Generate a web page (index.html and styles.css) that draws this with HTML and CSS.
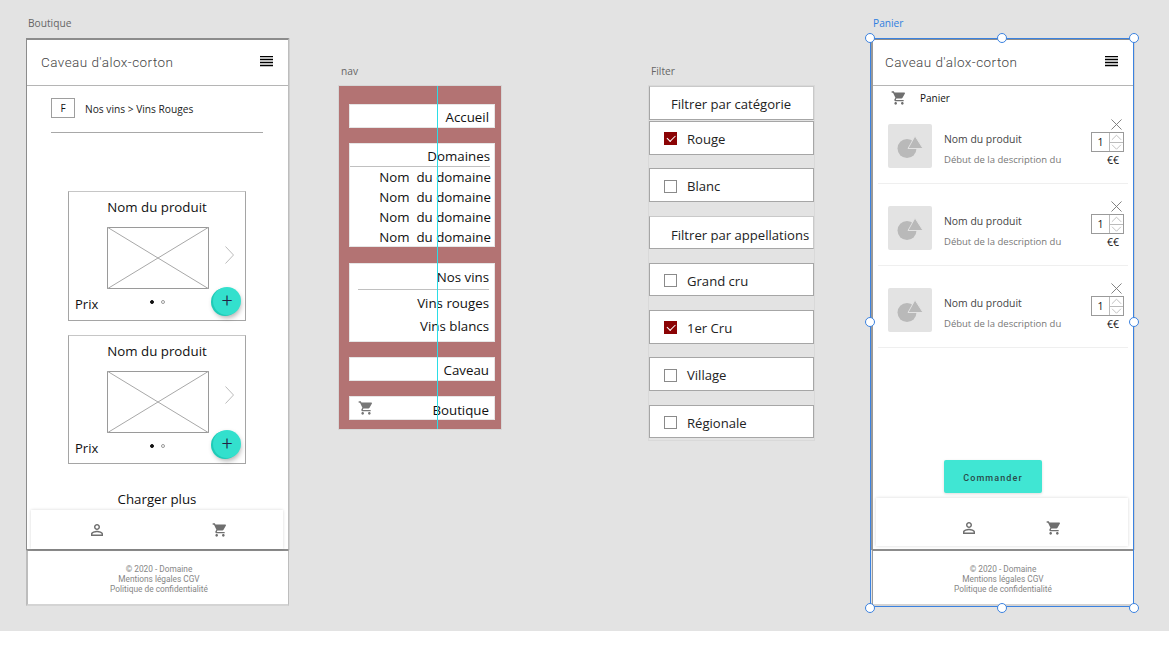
FILE: index.html
```html
<!DOCTYPE html>
<html lang="en">

<head>
    <meta charset="UTF-8">
    <meta name="viewport" content="width=device-width, initial-scale=1.0">
    <title>Caveau d'alox-corton</title>
    <link rel="stylesheet" href="styles.css">
</head>

<body>
    <svg class="defs" width="0" height="0">
        <symbol id="cart" viewBox="0 0 24 24">
            <path d="M7 18c-1.1 0-1.99.9-1.99 2S5.9 22 7 22s2-.9 2-2-.9-2-2-2zM1 2v2h2l3.6 7.59-1.35 2.45c-.16.28-.25.61-.25.96 0 1.1.9 2 2 2h12v-2H7.42c-.14 0-.25-.11-.25-.25l.03-.12.9-1.83h7.45c.75 0 1.41-.41 1.75-1.03l3.58-6.49c.08-.14.12-.31.12-.48 0-.55-.45-1-1-1H5.21l-.94-2H1zm16 16c-1.1 0-1.99.9-1.99 2s.89 2 1.99 2 2-.9 2-2-.9-2-2-2z" />
        </symbol>
        <symbol id="person" viewBox="0 0 24 24">
            <path d="M12 5.9c1.16 0 2.1.94 2.1 2.1s-.94 2.1-2.1 2.1S9.9 9.16 9.9 8s.94-2.1 2.1-2.1m0 9c2.97 0 6.1 1.46 6.1 2.1v1.1H5.9V17c0-.64 3.13-2.1 6.1-2.1M12 4C9.79 4 8 5.79 8 8s1.79 4 4 4 4-1.79 4-4-1.79-4-4-4zm0 9c-2.67 0-8 1.34-8 4v3h16v-3c0-2.66-5.33-4-8-4z" />
        </symbol>
        <symbol id="menu" viewBox="0 0 13 12">
            <path d="M0 .5h13M0 3.500h13M0 6.500h13M0 9.500h13" stroke="#000" stroke-width="1.300" fill="none" />
        </symbol>
        <symbol id="shapes" viewBox="0 0 44 44">
            <circle cx="19" cy="24.500" r="9.500" fill="#b9b9b9" />
            <path d="M27 12L35 24.500H20z" fill="#b9b9b9" stroke="#e3e3e3" stroke-width="1" />
        </symbol>
    </svg>

    <main class="canvas">
        <!-- Boutique -->
        <section class="artboard boutique">
            <span class="board-label">Boutique</span>
            <div class="phone">
                <header class="app-header">
                    <span class="brand">Caveau d'alox-corton</span>
                    <svg class="menu-icon"><use href="#menu" /></svg>
                </header>
                <div class="crumbs">
                    <span class="filter-btn">F</span>
                    <span class="crumb-text">Nos vins &gt; Vins Rouges</span>
                </div>
                <hr class="crumb-rule">

                <article class="product">
                    <h3 class="product-name">Nom du produit</h3>
                    <div class="product-media">
                        <svg class="placeholder" viewBox="0 0 102 62" preserveAspectRatio="none">
                            <rect x=".5" y=".5" width="101" height="61" fill="#fff" stroke="#9a9a9a" />
                            <path d="M0 0L102 62M102 0L0 62" stroke="#a8a8a8" fill="none" />
                        </svg>
                        <svg class="chevron" viewBox="0 0 9 18"><path d="M.5 .5l8 8.500-8 8.500" fill="none" stroke="#bbb" /></svg>
                    </div>
                    <div class="product-foot">
                        <span class="price">Prix</span>
                        <span class="dots"><i class="dot on"></i><i class="dot"></i></span>
                    </div>
                    <button class="fab">+</button>
                </article>

                <article class="product">
                    <h3 class="product-name">Nom du produit</h3>
                    <div class="product-media">
                        <svg class="placeholder" viewBox="0 0 102 62" preserveAspectRatio="none">
                            <rect x=".5" y=".5" width="101" height="61" fill="#fff" stroke="#9a9a9a" />
                            <path d="M0 0L102 62M102 0L0 62" stroke="#a8a8a8" fill="none" />
                        </svg>
                        <svg class="chevron" viewBox="0 0 9 18"><path d="M.5 .5l8 8.500-8 8.500" fill="none" stroke="#bbb" /></svg>
                    </div>
                    <div class="product-foot">
                        <span class="price">Prix</span>
                        <span class="dots"><i class="dot on"></i><i class="dot"></i></span>
                    </div>
                    <button class="fab">+</button>
                </article>

                <p class="load-more">Charger plus</p>
                <nav class="tabbar boutique-tabs">
                    <svg class="tab-icon person"><use href="#person" /></svg>
                    <svg class="tab-icon"><use href="#cart" /></svg>
                </nav>
            </div>
            <footer class="legal">
                <span>© 2020 - Domaine</span>
                <span>Mentions légales CGV</span>
                <span>Politique de confidentialité</span>
            </footer>
        </section>

        <!-- nav -->
        <section class="artboard nav-board">
            <span class="board-label">nav</span>
            <div class="nav-panel">
                <div class="nav-box nav-single">Accueil</div>
                <div class="nav-box nav-domains">
                    <div class="nav-title">Domaines</div>
                    <div class="nav-line">Nom &nbsp;du domaine</div>
                    <div class="nav-line">Nom &nbsp;du domaine</div>
                    <div class="nav-line">Nom &nbsp;du domaine</div>
                    <div class="nav-line">Nom &nbsp;du domaine</div>
                </div>
                <div class="nav-box nav-wines">
                    <div class="nav-title">Nos vins</div>
                    <div class="nav-sub">Vins rouges</div>
                    <div class="nav-sub">Vins blancs</div>
                </div>
                <div class="nav-box nav-single">Caveau</div>
                <div class="nav-box nav-single nav-shop">
                    <svg class="nav-cart"><use href="#cart" /></svg>
                    <span class="nav-shop-text">Boutique</span>
                </div>
                <span class="guide"></span>
            </div>
        </section>

        <!-- Filter -->
        <section class="artboard filter-board">
            <span class="board-label">Filter</span>
            <div class="filter-panel">
                <div class="filter-row filter-head first">Filtrer par catégorie</div>
                <label class="filter-row tight"><span class="check on"></span>Rouge</label>
                <label class="filter-row"><span class="check"></span>Blanc</label>
                <div class="filter-row filter-head second">Filtrer par appellations</div>
                <label class="filter-row"><span class="check"></span>Grand cru</label>
                <label class="filter-row"><span class="check on"></span>1er Cru</label>
                <label class="filter-row"><span class="check"></span>Village</label>
                <label class="filter-row"><span class="check"></span>Régionale</label>
            </div>
        </section>

        <!-- Panier -->
        <section class="artboard panier">
            <span class="board-label selected-label">Panier</span>
            <div class="phone panier-phone">
                <header class="app-header">
                    <span class="brand">Caveau d'alox-corton</span>
                    <svg class="menu-icon"><use href="#menu" /></svg>
                </header>
                <div class="cart-title">
                    <svg class="cart-icon"><use href="#cart" /></svg>
                    <span>Panier</span>
                </div>

                <div class="cart-item">
                    <svg class="thumb"><use href="#shapes" /></svg>
                    <div class="item-text">
                        <span class="item-name">Nom du produit</span>
                        <span class="item-desc">Début de la description du</span>
                    </div>
                    <div class="item-side">
                        <span class="remove">
                            <svg viewBox="0 0 12 12"><path d="M.5 .5l11 11M11.500 .5l-11 11" stroke="#777" fill="none" /></svg>
                        </span>
                        <div class="stepper">
                            <span class="qty">1</span>
                            <span class="arrows">
                                <svg viewBox="0 0 14 9"><path d="M2 7l5-5 5 5" stroke="#bbb" fill="none" /></svg>
                                <svg viewBox="0 0 14 9"><path d="M2 2l5 5 5-5" stroke="#bbb" fill="none" /></svg>
                            </span>
                        </div>
                        <span class="item-price">€€</span>
                    </div>
                </div>

                <div class="cart-item">
                    <svg class="thumb"><use href="#shapes" /></svg>
                    <div class="item-text">
                        <span class="item-name">Nom du produit</span>
                        <span class="item-desc">Début de la description du</span>
                    </div>
                    <div class="item-side">
                        <span class="remove">
                            <svg viewBox="0 0 12 12"><path d="M.5 .5l11 11M11.500 .5l-11 11" stroke="#777" fill="none" /></svg>
                        </span>
                        <div class="stepper">
                            <span class="qty">1</span>
                            <span class="arrows">
                                <svg viewBox="0 0 14 9"><path d="M2 7l5-5 5 5" stroke="#bbb" fill="none" /></svg>
                                <svg viewBox="0 0 14 9"><path d="M2 2l5 5 5-5" stroke="#bbb" fill="none" /></svg>
                            </span>
                        </div>
                        <span class="item-price">€€</span>
                    </div>
                </div>

                <div class="cart-item">
                    <svg class="thumb"><use href="#shapes" /></svg>
                    <div class="item-text">
                        <span class="item-name">Nom du produit</span>
                        <span class="item-desc">Début de la description du</span>
                    </div>
                    <div class="item-side">
                        <span class="remove">
                            <svg viewBox="0 0 12 12"><path d="M.5 .5l11 11M11.500 .5l-11 11" stroke="#777" fill="none" /></svg>
                        </span>
                        <div class="stepper">
                            <span class="qty">1</span>
                            <span class="arrows">
                                <svg viewBox="0 0 14 9"><path d="M2 7l5-5 5 5" stroke="#bbb" fill="none" /></svg>
                                <svg viewBox="0 0 14 9"><path d="M2 2l5 5 5-5" stroke="#bbb" fill="none" /></svg>
                            </span>
                        </div>
                        <span class="item-price">€€</span>
                    </div>
                </div>

                <button class="order-btn">Commander</button>
                <nav class="tabbar panier-tabs">
                    <svg class="tab-icon person"><use href="#person" /></svg>
                    <svg class="tab-icon"><use href="#cart" /></svg>
                </nav>
            </div>
            <footer class="legal panier-legal">
                <span>© 2020 - Domaine</span>
                <span>Mentions légales CGV</span>
                <span>Politique de confidentialité</span>
            </footer>

            <div class="selection">
                <i class="handle tl"></i><i class="handle tc"></i><i class="handle tr"></i>
                <i class="handle ml"></i><i class="handle mr"></i>
                <i class="handle bl"></i><i class="handle bc"></i><i class="handle br"></i>
            </div>
        </section>
    </main>
</body>

</html>
```

FILE: styles.css
```css
* {
    box-sizing: border-box;
}

body {
    margin: 0;
    background-color: #fff;
    color: #111;
    font-family: "Open Sans", "Noto Sans", sans-serif;
    height: 648px;
    overflow: hidden;
}

.defs {
    display: block;
    height: 0;
}

.canvas {
    position: relative;
    height: 631px;
    background-color: #e3e3e3;
}

/* artboards sit on a free canvas */
.artboard {
    position: absolute;
}

.board-label {
    position: absolute;
    left: 2px;
    top: -22px;
    font-size: 10.200px;
    line-height: 14px;
    color: #666;
}

.selected-label {
    color: #2f7fe0;
}

.boutique {
    left: 26px;
    top: 38px;
    width: 263px;
}

.nav-board {
    left: 339px;
    top: 86px;
    width: 162px;
}

.filter-board {
    left: 649px;
    top: 86px;
    width: 165px;
}

.panier {
    left: 871px;
    top: 38px;
    width: 263px;
}

/* phone screens */
.phone {
    height: 512px;
    background-color: #fff;
    border: 1px solid #8c8c8c;
    border-right-color: #bdbdbd;
    border-top-width: 2px;
    box-shadow: 1px 0 0 #cfcfcf;
    display: flex;
    flex-direction: column;
}

.app-header {
    height: 46px;
    flex: none;
    display: flex;
    align-items: center;
    justify-content: space-between;
    padding: 0 15px 2px 14px;
    border-bottom: 1px solid #b5b5b5;
}

.brand {
    font-family: Roboto, sans-serif;
    font-size: 13.500px;
    font-weight: 300;
    letter-spacing: .45px;
    color: #444;
}

.menu-icon {
    width: 13px;
    height: 12px;
}

.crumbs {
    display: flex;
    align-items: center;
    padding: 12px 0 0 24px;
}

.filter-btn {
    width: 24px;
    height: 20px;
    border: 1px solid #9e9e9e;
    font-size: 10px;
    line-height: 18px;
    text-align: center;
}

.crumb-text {
    margin-left: 10px;
    padding-top: 2px;
    font-size: 10.200px;
    color: #222;
}

.crumb-rule {
    width: 212px;
    margin: 14px 0 0 24px;
    height: 1px;
    border: 0;
    background-color: #a8a8a8;
}

.product {
    position: relative;
    width: 178px;
    height: 130px;
    margin: 58px 0 0 41px;
    border: 1px solid #a5a5a5;
    border-top-color: #c6c6c6;
}

.product + .product {
    margin-top: 14px;
}

.product-name {
    margin: 6px 0 0;
    font-size: 13.300px;
    line-height: 19px;
    font-weight: 400;
    text-align: center;
}

.product-media {
    display: flex;
    align-items: center;
    margin: 10px 0 0 38px;
}

.placeholder {
    width: 102px;
    height: 62px;
}

.chevron {
    width: 9px;
    height: 18px;
    margin-left: 16px;
    margin-top: -6px;
}

.product + .product .chevron {
    margin-top: -14px;
}

.product-foot {
    display: flex;
    align-items: center;
    padding: 5px 0 0 6px;
}

.price {
    font-size: 13px;
    line-height: 20px;
}

.dots {
    display: flex;
    gap: 7px;
    margin-left: 52px;
    margin-top: -4px;
}

.dot {
    width: 4px;
    height: 4px;
    border-radius: 50%;
    border: 1px solid #999;
}

.dot.on {
    background-color: #111;
    border-color: #111;
}

.fab {
    position: absolute;
    right: 4px;
    bottom: 5px;
    width: 28px;
    height: 28px;
    padding: 0;
    border: 0;
    border-radius: 50%;
    background: #33e0cd;
    box-shadow: -2px 1px 0 #1fcbb7, 0 3px 5px rgba(0, 0, 0, .3);
    font-family: Roboto, sans-serif;
    font-size: 19px;
    line-height: 26px;
    font-weight: 300;
    color: #224;
}

.load-more {
    margin: 26px 0 0;
    padding-right: 1px;
    font-size: 13.300px;
    line-height: 19px;
    text-align: center;
}

.tabbar {
    background-color: #fff;
    box-shadow: 0 0 3px rgba(0, 0, 0, .16);
    display: flex;
    align-items: center;
}

.boutique-tabs {
    height: 39px;
    margin: 1px 5px 0 4px;
    padding: 0 55px 0 57px;
    justify-content: space-between;
}

.tab-icon {
    width: 16px;
    height: 16px;
    fill: #6f6f6f;
}

.person {
    width: 18px;
    height: 18px;
}

.legal {
    height: 56px;
    padding: 13px 0 0 2px;
    background-color: #fff;
    border: 1px solid #bdbdbd;
    border-left-width: 2px;
    border-top-color: #8c8c8c;
    border-bottom-width: 2px;
    border-bottom-color: #d4d4d4;
    display: flex;
    flex-direction: column;
    align-items: center;
    font-family: Roboto, sans-serif;
    font-size: 8.300px;
    line-height: 10px;
    color: #868686;
}

/* nav panel */
.nav-panel {
    position: relative;
    height: 343px;
    padding: 18px 6px 0 10px;
    background-color: #b37373;
    display: flex;
    flex-direction: column;
    box-shadow: 0 0 0 1px #d6d6d6;
}

.nav-box {
    background-color: #fff;
    font-size: 13.300px;
    text-align: right;
    border: 1px solid #e6e6e6;
}

.nav-single {
    height: 24px;
    line-height: 24px;
    padding-right: 5px;
    margin-bottom: 15px;
}

.nav-domains {
    height: 104px;
    margin-bottom: 16px;
    padding-right: 3px;
}

.nav-title {
    height: 23px;
    line-height: 24px;
    margin-right: 1px;
    border-bottom: 1px solid #c0c0c0;
}

.nav-line {
    height: 20px;
    line-height: 20px;
}

.nav-wines {
    height: 79px;
    margin-bottom: 15px;
    padding: 0 5px 0 8px;
}

.nav-wines .nav-title {
    height: 26px;
    line-height: 26px;
    margin-right: 0;
}

.nav-sub {
    height: 23px;
    line-height: 27px;
}

.nav-shop {
    display: flex;
    align-items: center;
    justify-content: space-between;
    padding-left: 8px;
    margin-bottom: 0;
}

.nav-shop-text {
    padding-top: 4px;
}

.nav-cart {
    width: 16px;
    height: 16px;
    fill: #777;
}

.guide {
    position: absolute;
    left: 98px;
    top: 0;
    bottom: 0;
    width: 1px;
    background-color: #2bdde6;
}

/* filter panel */
.filter-panel {
    height: 354px;
    display: flex;
    flex-direction: column;
    box-shadow: 0 0 0 1px #d9d9d9;
}

.filter-row {
    height: 33.500px;
    flex: none;
    margin-top: 13.800px;
    padding: 2px 0 0 14px;
    display: flex;
    align-items: center;
    gap: 10px;
    background-color: #fff;
    border: 1px solid #a6a6a6;
    font-size: 13.100px;
    color: #222;
}

.filter-row.first {
    height: 34px;
    margin-top: 0;
}

.filter-row.tight {
    margin-top: 1px;
}

.filter-head {
    padding-left: 21px;
    border-top-color: #c9c9c9;
    border-right-color: #c9c9c9;
}

.filter-head.second {
    padding-top: 5px;
}

.check {
    width: 13px;
    height: 13px;
    flex: none;
    border: 1px solid #8a8a8a;
    background-color: #fff;
    position: relative;
}

.check.on {
    background-color: #8b0304;
    border-color: #8b0304;
}

.check.on::after {
    content: "";
    position: absolute;
    left: 2px;
    top: 2px;
    width: 7px;
    height: 3.500px;
    border-left: 1.500px solid #fff;
    border-bottom: 1.500px solid #fff;
    transform: rotate(-45deg);
}

/* panier */
.panier-phone {
    border-left-color: #999;
    border-left-width: 2px;
}

.panier-phone .app-header {
    padding-left: 12px;
}

.cart-title {
    display: flex;
    align-items: center;
    gap: 13px;
    padding: 4px 0 0 18px;
    font-size: 10px;
    height: 20px;
}

.cart-icon {
    width: 16px;
    height: 16px;
    fill: #6f6f6f;
}

.cart-item {
    position: relative;
    display: flex;
    height: 82px;
    margin: 0 5px;
    padding: 22px 0 0 10px;
    border-bottom: 1px solid #efefef;
}

.cart-title + .cart-item {
    height: 78px;
    padding-top: 18px;
}

.thumb {
    width: 44px;
    height: 44px;
    flex: none;
    background-color: #e3e3e3;
    border-radius: 2px;
}

.item-text {
    display: flex;
    flex-direction: column;
    margin-left: 12px;
    width: 147px;
    padding-top: 8px;
}

.item-name {
    font-size: 10.400px;
    line-height: 14px;
    color: #444;
}

.item-desc {
    margin-top: 7px;
    font-size: 9.500px;
    line-height: 14px;
    color: #777;
}

.item-side {
    width: 33px;
    margin-top: -5px;
    display: flex;
    flex-direction: column;
    align-items: center;
}

.remove {
    width: 11px;
    height: 11px;
    margin-bottom: 2px;
    margin-left: 18px;
}

.remove svg {
    display: block;
}

.stepper {
    width: 33px;
    height: 20px;
    flex: none;
    display: flex;
    border: 1px solid #9a9a9a;
}

.qty {
    flex: 1;
    font-size: 10.500px;
    line-height: 18px;
    text-align: center;
}

.arrows {
    width: 14px;
    display: flex;
    flex-direction: column;
    border-left: 1px solid #bbb;
}

.arrows svg {
    display: block;
    height: 9px;
}

.arrows svg + svg {
    border-top: 1px solid #bbb;
}

.item-price {
    margin-top: 2px;
    margin-left: 11px;
    font-size: 10.500px;
    line-height: 12px;
}

.order-btn {
    align-self: flex-start;
    width: 98px;
    height: 33px;
    margin: 112px 0 0 71px;
    padding: 2px 0 0;
    border: 0;
    border-radius: 2px;
    background-color: #40e6d3;
    box-shadow: 0 1px 3px rgba(0, 0, 0, .14);
    font-family: Roboto, sans-serif;
    font-size: 9px;
    font-weight: 500;
    letter-spacing: 1.100px;
    color: #2a4a4a;
}

.panier-tabs {
    height: 48px;
    margin: 5px 5px 0 3px;
    padding: 11px 66px 0 84px;
    justify-content: space-between;
}

.panier-legal {
    margin-left: 1px;
    border-left-width: 1px;
    border-left-color: #9a9a9a;
    padding: 13px 0 0;
}

/* selection frame on top of the artboard */
.selection {
    position: absolute;
    left: -1px;
    top: 0;
    width: 264px;
    height: 569px;
    border: 1px solid #3b82e0;
    pointer-events: none;
}

.handle {
    position: absolute;
    width: 10px;
    height: 10px;
    border-radius: 50%;
    background-color: #fff;
    border: 1px solid #3b82e0;
}

.tl { left: -6.500px; top: -6.500px; }
.tc { left: 126px; top: -6.500px; }
.tr { right: -6px; top: -6.500px; }
.ml { left: -6.500px; top: 278px; }
.mr { right: -6px; top: 278px; }
.bl { left: -6.500px; bottom: -6.500px; }
.bc { left: 126px; bottom: -6.500px; }
.br { right: -6px; bottom: -6.500px; }
```
